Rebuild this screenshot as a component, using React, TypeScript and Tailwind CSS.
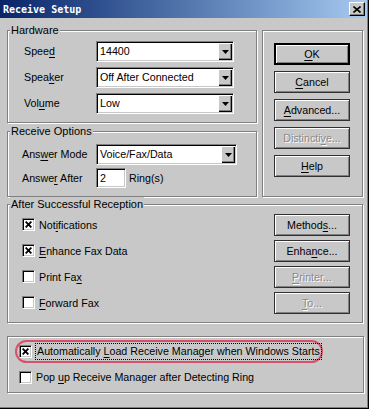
import React from "react";

type Kids = { children: React.ReactNode };

function Key({ children }: Kids) {
  return <span className="underline decoration-1 underline-offset-[2px]">{children}</span>;
}

function Group({ label, className, children }: { label?: string; className: string; children?: React.ReactNode }) {
  return (
    <div className={"relative border border-[#808080] shadow-[inset_1px_1px_0_#fff,1px_1px_0_#fff] " + className}>
      {label && (
        <span className="absolute -top-[8px] left-[2px] whitespace-nowrap bg-[#c8c8c8] px-[1px] text-[11px] leading-[14px]">
          {label}
        </span>
      )}
      {children}
    </div>
  );
}

function Btn({ children, disabled, primary }: Kids & { disabled?: boolean; primary?: boolean }) {
  return (
    <div
      className={
        "flex h-[22px] w-[76px] shrink-0 items-center justify-center text-[10.7px] leading-none " +
        (primary
          ? "border-2 border-black shadow-[inset_1px_1px_0_#fff,inset_-1px_-1px_0_#808080] "
          : "border border-[#303030] shadow-[inset_1px_1px_0_#fff,inset_-1px_-1px_0_#808080] ") +
        (disabled ? "text-[#8a8a8a] [text-shadow:1px_1px_0_#fff]" : "text-black")
      }
    >
      <span className="whitespace-nowrap">{children}</span>
    </div>
  );
}

function Check({ on }: { on?: boolean }) {
  return (
    <div className="flex h-[13px] w-[13px] shrink-0 items-center justify-center border border-t-[#808080] border-l-[#808080] border-b-white border-r-white bg-white shadow-[inset_1px_1px_0_#000,inset_-1px_-1px_0_#c8c8c8]">
      {on && (
        <svg width="7" height="7" viewBox="0 0 7 7">
          <path d="M0.6 0.6L6.4 6.4M6.4 0.6L0.6 6.4" stroke="#000" strokeWidth="1.9" />
        </svg>
      )}
    </div>
  );
}

function Combo({ value, className }: { value: string; className: string }) {
  return (
    <div
      className={
        "flex h-[21px] border border-t-[#808080] border-l-[#808080] border-b-white border-r-white bg-white p-[1px] shadow-[inset_1px_1px_0_#000,inset_-1px_-1px_0_#c8c8c8] " +
        className
      }
    >
      <span className="flex-1 whitespace-nowrap pl-[2px] text-[10.7px] leading-[17px]">{value}</span>
      <div className="flex w-[14px] items-center justify-center bg-[#c8c8c8] shadow-[inset_1px_1px_0_#fff,inset_-1px_-1px_0_#000,inset_-2px_-2px_0_#808080]">
        <svg width="7" height="4" viewBox="0 0 7 4">
          <path d="M0 0H7L3.5 4Z" fill="#000" />
        </svg>
      </div>
    </div>
  );
}

function Row({ label, children }: { label: React.ReactNode } & Kids) {
  return (
    <div className="flex items-center">
      <span className="w-[72px] text-[10.7px]">{label}</span>
      {children}
    </div>
  );
}

export default function App() {
  return (
    <div className="h-[409px] w-[369px] overflow-hidden border-b border-r border-black bg-[#c8c8c8] text-black shadow-[inset_-1px_-1px_0_#808080] [font-family:'Liberation_Sans',Arial,sans-serif]">
      {/* Title bar */}
      <div className="mr-[1px] flex h-[18px] items-center justify-between bg-linear-to-r from-[#0a246a] to-[#a6caf0] pl-[3px] pr-[2px]">
        <span className="text-[10px] font-bold text-white [font-family:'DejaVu_Sans_Mono',monospace]">Receive Setup</span>
        <div className="flex h-[14px] w-[16px] items-center justify-center border border-t-white border-l-white border-b-black border-r-black bg-[#c8c8c8] shadow-[inset_-1px_-1px_0_#808080]">
          <svg width="8" height="7" viewBox="0 0 8 7">
            <path d="M0.5 0.5L7.5 6.5M7.5 0.5L0.5 6.5" stroke="#000" strokeWidth="1.6" />
          </svg>
        </div>
      </div>

      <div className="flex flex-col pl-[7px] pt-[12px]">
        <div className="flex gap-[5px]">
          <div className="flex w-[250px] flex-col gap-[8px]">
            <Group label="Hardware" className="flex h-[93px] flex-col gap-[5px] pl-[16px] pt-[10px]">
              <Row label={<>Spee<Key>d</Key></>}>
                <Combo value="14400" className="w-[138px]" />
              </Row>
              <Row label={<>Spea<Key>k</Key>er</>}>
                <Combo value="Off After Connected" className="w-[138px]" />
              </Row>
              <Row label={<>Vol<Key>u</Key>me</>}>
                <Combo value="Low" className="w-[138px]" />
              </Row>
            </Group>
            <Group label="Receive Options" className="flex h-[66px] flex-col gap-[3px] pl-[14px] pt-[12px]">
              <div className="flex items-center">
                <span className="w-[74px] text-[10.7px]">Ans<Key>w</Key>er Mode</span>
                <Combo value="Voice/Fax/Data" className="w-[141px]" />
              </div>
              <div className="flex items-center">
                <span className="w-[74px] text-[10.7px]">Answe<Key>r</Key> After</span>
                <div className="h-[20px] w-[30px] border border-t-[#808080] border-l-[#808080] border-b-white border-r-white bg-white pl-[3px] text-[10.7px] leading-[18px] shadow-[inset_1px_1px_0_#000,inset_-1px_-1px_0_#c8c8c8]">
                  2
                </div>
                <span className="ml-[3px] text-[10.7px]">Ring(s)</span>
              </div>
            </Group>
          </div>
          <Group className="flex w-[101px] flex-col gap-[6px] pl-[11px] pt-[12px]">
            <Btn primary><Key>O</Key>K</Btn>
            <Btn><Key>C</Key>ancel</Btn>
            <Btn><Key>A</Key>dvanced...</Btn>
            <Btn disabled>Distincti<Key>v</Key>e...</Btn>
            <Btn><Key>H</Key>elp</Btn>
          </Group>
        </div>

        <Group label="After Successful Reception" className="mt-[7px] flex h-[119px] w-[356px] flex-col gap-[4px] pl-[14px] pr-[12px] pt-[9px]">
          {[
            { on: true, text: <>Not<Key>i</Key>fications</>, btn: <>Method<Key>s</Key>...</>, dis: false },
            { on: true, text: <><Key>E</Key>nhance Fax Data</>, btn: <>Enha<Key>n</Key>ce...</>, dis: false },
            { on: false, text: <>Print Fa<Key>x</Key></>, btn: <><Key>P</Key>rinter...</>, dis: true },
            { on: false, text: <><Key>F</Key>orward Fax</>, btn: <><Key>T</Key>o...</>, dis: true },
          ].map((r, i) => (
            <div key={i} className="flex h-[22px] items-center justify-between">
              <div className="flex items-center gap-[4px]">
                <Check on={r.on} />
                <span className="whitespace-nowrap text-[10.7px]">{r.text}</span>
              </div>
              <Btn disabled={r.dis}>{r.btn}</Btn>
            </div>
          ))}
        </Group>

        <Group className="mt-[13px] flex h-[57px] w-[357px] flex-col pl-[7px] pt-[3px]">
          <div className="flex h-[23px] w-[308px] items-center rounded-full border-2 border-[#d8506a] pl-[2px]">
            <Check on />
            <span className="ml-[3px] whitespace-nowrap border border-dotted border-black px-[1px] text-[10.7px] leading-[15px]">
              Automatically <Key>L</Key>oad Receive Manager when Windows Starts
            </span>
          </div>
          <div className="mt-[6px] flex items-center gap-[4px] pl-[4px]">
            <Check />
            <span className="whitespace-nowrap text-[10.7px]">Pop <Key>u</Key>p Receive Manager after Detecting Ring</span>
          </div>
        </Group>
      </div>
    </div>
  );
}
